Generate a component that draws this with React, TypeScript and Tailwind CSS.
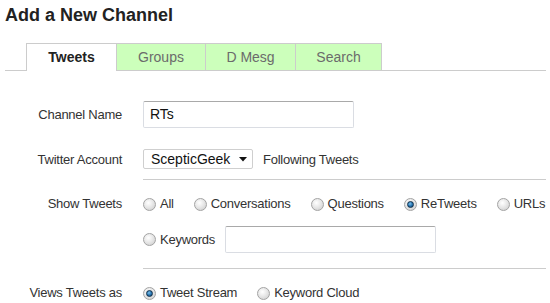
import React from "react";

function Radio({ checked = false }: { checked?: boolean }) {
  return (
    <span className="relative inline-flex h-[13px] w-[13px] shrink-0 items-center justify-center rounded-full border border-[#a3a3a3] bg-[radial-gradient(circle_at_40%_35%,#ffffff_0%,#e8e8e8_45%,#c9c9c9_100%)]">
      {checked ? (
        <span className="block h-[7px] w-[7px] rounded-full border border-[#0f2f4a] bg-[radial-gradient(circle_at_40%_35%,#7fc2ec_0%,#2a78b4_50%,#123e66_100%)]" />
      ) : null}
    </span>
  );
}

function RadioItem({ label, checked = false }: { label: string; checked?: boolean }) {
  return (
    <span className="inline-flex items-center gap-[4px]">
      <Radio checked={checked} />
      <span>{label}</span>
    </span>
  );
}

function Row({ label, children, className = "", labelClass = "" }: { label?: string; children: React.ReactNode; className?: string; labelClass?: string }) {
  return (
    <div className={"flex items-center " + className}>
      <div className={"w-[122px] shrink-0 text-right text-[#333] " + labelClass}>{label}</div>
      <div className="ml-[21px] flex flex-1 items-center">{children}</div>
    </div>
  );
}

export default function App() {
  return (
    <div className="h-[303px] w-[550px] overflow-hidden bg-white font-['Liberation_Sans',Arial,sans-serif] text-[13px] tracking-[-0.25px] text-[#333]">
      <h1 className="pl-[5px] pt-[3px] text-[18px] font-bold leading-[24px] tracking-normal text-[#222]">
        Add a New Channel
      </h1>

      <div className="ml-[5px] mr-[4px] mt-[16px] flex border-b border-[#cccccc] pl-[21px] text-[14px] tracking-normal">
        <div className="-mb-px flex h-[28px] w-[91px] items-center justify-center border-x border-t border-[#cccccc] bg-white pb-px font-bold text-[#222]">
          Tweets
        </div>
        <div className="flex h-[27px] w-[89px] items-center justify-center border-r border-t border-[#cccccc] bg-[#ccffbb] text-[#6b6b6b]">
          Groups
        </div>
        <div className="flex h-[27px] w-[90px] items-center justify-center border-r border-t border-[#cccccc] bg-[#ccffbb] text-[#6b6b6b]">
          D Mesg
        </div>
        <div className="flex h-[27px] w-[86px] items-center justify-center border-r border-t border-[#cccccc] bg-[#ccffbb] text-[#6b6b6b]">
          Search
        </div>
      </div>

      <Row label="Channel Name" className="mt-[30px]">
        <div className="flex h-[27px] w-[211px] items-center rounded-[2px] border border-[#dadde3] border-t-[#a9a9a9] pl-[6px] text-[14px] tracking-normal text-[#111]">
          RTs
        </div>
      </Row>

      <Row label="Twitter Account" className="mt-[21px] h-[20px]" labelClass="translate-y-[1px]">
        <div className="flex h-[20px] w-[110px] items-center justify-between rounded-[2px] border border-[#cfcfcf] pl-[7px] pr-[5px] text-[14px] tracking-normal text-[#111]">
          <span>ScepticGeek</span>
          <svg width="8" height="5" viewBox="0 0 8 5">
            <polygon points="0,0 8,0 4,4.5" fill="#111" />
          </svg>
        </div>
        <span className="ml-[10px] translate-y-[1px]">Following Tweets</span>
      </Row>

      <div className="ml-[143px] mr-[4px] mt-[10px] border-t border-[#cccccc]" />

      <Row label="Show Tweets" className="mt-[14px] h-[20px]">
        <div className="flex items-center gap-[20px]">
          <RadioItem label="All" />
          <RadioItem label="Conversations" />
          <RadioItem label="Questions" />
          <RadioItem label="ReTweets" checked />
          <RadioItem label="URLs" />
        </div>
      </Row>

      <Row className="mt-[12px]">
        <RadioItem label="Keywords" />
        <div className="ml-[10px] h-[27px] w-[211px] rounded-[2px] border border-[#dadde3] border-t-[#a9a9a9]" />
      </Row>

      <div className="ml-[143px] mr-[4px] mt-[15px] border-t border-[#cccccc]" />

      <Row label="Views Tweets as" className="mt-[14px] h-[20px]">
        <div className="flex items-center gap-[20px]">
          <RadioItem label="Tweet Stream" checked />
          <RadioItem label="Keyword Cloud" />
        </div>
      </Row>
    </div>
  );
}
